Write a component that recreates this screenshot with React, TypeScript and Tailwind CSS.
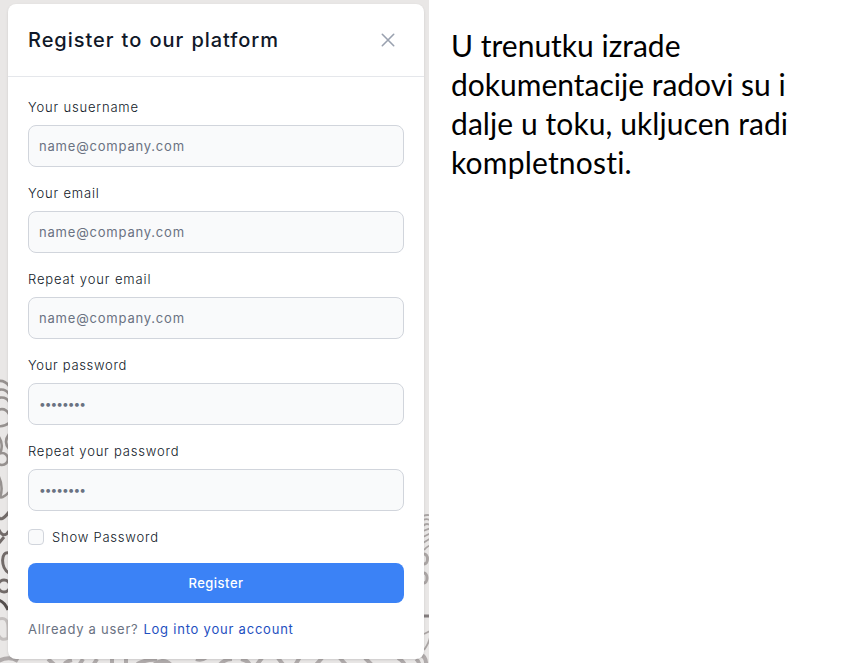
import React from "react";

type FieldProps = { label: string; placeholder: string; type?: string; labelClass: string };

function Field({ label, placeholder, type = "text", labelClass }: FieldProps) {
  const dots = type === "password";
  return (
    <div>
      <label className={`mb-2 block text-[13px] leading-5 font-[350] text-gray-900 ${labelClass}`}>{label}</label>
      <input
        type={type}
        placeholder={placeholder}
        className={`block h-[42px] w-full rounded-lg border border-gray-300 bg-gray-50 px-2.5 leading-5 outline-none placeholder:text-gray-500 ${
          dots ? "pb-0.5 text-[12px] tracking-[-0.99px]" : "text-[13px] tracking-[0.8px]"
        }`}
      />
    </div>
  );
}

function Backdrop() {
  return (
    <svg className="absolute inset-0 h-full w-full" viewBox="0 0 429 663" fill="none">
      <rect width="429" height="663" fill="#e9e7e6" />
      <g stroke="#96918f" strokeWidth="2.6">
        <path d="M-2 381Q5 380 9 386M-2 390Q5 388 9 394M-2 398Q6 396 9 402M-2 410Q5 407 9 414M-2 426Q4 427 9 423" />
        <path d="M9 434Q3 442 9 449M-1 437Q4 445 0 453" />
        <circle cx="2" cy="459" r="6" />
        <path d="M-2 475Q4 486 0 498M9 492Q2 500 -2 496" />
      </g>
      <g stroke="#726b69" strokeWidth="3">
        <path d="M9 512Q0 524 -2 515M-2 528Q3 540 9 531M9 553C1 550 0 568 9 573M-1 543L4 537" />
        <circle cx="4" cy="586" r="6" />
        <path d="M-2 600Q4 601 8 610" stroke="#554f4e" />
      </g>
      <path d="M-1 619Q8 616 8 628V638Q1 642 -2 634" stroke="#c4c0bf" strokeWidth="3" />
      <g stroke="#b0abab" strokeWidth="4">
        <path d="M-3 662Q8 655 18 661M48 659L57 667M72 660Q63 662 65 667M83 659L78 667M97 659L92 667M112 659V667M126 659V667M137 664Q147 659 157 660M151 667Q163 656 171 665" />
        <path d="M196 659Q202 661 207 657M218 667Q223 659 232 659M241 659Q250 661 250 667M262 658L255 667M278 658L285 667M294 667L300 657M314 667L322 658M339 657L348 667M365 658L374 667M398 658Q405 662 405 667M421 655Q427 657 426 667M416 659Q420 662 419 667" />
      </g>
      <g stroke="#aaa5a4" strokeWidth="1.8">
        <path d="M423 516Q428 514 431 516M423 520Q428 518 431 521M423 526Q427 522 431 526M423 531L431 528M423 537L431 533M423 543L431 538M424 550Q429 544 431 547" />
        <ellipse cx="424" cy="559" rx="3.5" ry="5" strokeWidth="3" />
        <ellipse cx="424" cy="578" rx="3" ry="5" strokeWidth="3" />
        <path d="M422 616H430" stroke="#837d7e" strokeWidth="3" />
        <path d="M424 634L430 631M424 650Q429 643 430 637" />
      </g>
    </svg>
  );
}

export default function App() {
  return (
    <main className="flex h-[663px] w-[867px] overflow-hidden bg-white">
      <section className="relative w-[429px] shrink-0 overflow-hidden pt-1 pr-[5px] pl-2 font-['Inter',sans-serif]">
        <Backdrop />
        <div className="relative h-[655px] rounded-lg bg-white shadow">
          <header className="flex h-[73px] items-center justify-between border-b border-gray-200 px-5">
            <h3 className="text-[20px] leading-[30px] font-medium tracking-[0.95px] text-gray-900 [word-spacing:1px]">Register to our platform</h3>
            <button aria-label="Close modal" className="flex size-8 items-center justify-center text-gray-400">
              <svg className="size-3.5" viewBox="0 0 14 14" fill="none" stroke="currentColor" strokeWidth="1.6" strokeLinecap="round" strokeLinejoin="round">
                <path d="m1.3 1.3 11.4 11.4M1.3 12.7 12.7 1.3" />
              </svg>
            </button>
          </header>
          <form className="flex flex-col gap-4 px-5 pt-5">
            <Field label="Your usuername" placeholder="name@company.com" labelClass="tracking-[0.82px]" />
            <Field label="Your email" placeholder="name@company.com" labelClass="tracking-[0.82px]" />
            <Field label="Repeat your email" placeholder="name@company.com" labelClass="tracking-[0.87px]" />
            <Field label="Your password" placeholder="••••••••" type="password" labelClass="tracking-[0.68px]" />
            <Field label="Repeat your password" placeholder="••••••••" type="password" labelClass="tracking-[0.8px]" />
            <label className="flex h-5 items-center gap-2 text-[13px] leading-5 font-[350] tracking-[0.78px] text-gray-900">
              <input type="checkbox" className="size-4 appearance-none rounded border border-gray-300 bg-gray-50" />
              <span>Show Password</span>
            </label>
            <button type="button" className="h-10 w-full rounded-lg bg-[#3b82f6] pt-0.5 text-[13px] font-medium tracking-[0.5px] text-white">Register</button>
            <p className="flex gap-[5px] text-[13px] leading-5 whitespace-nowrap text-gray-500">
              <span className="tracking-[0.74px]">Allready a user?</span>
              <a className="tracking-[0.78px] text-[#1e4fbf]">Log into your account</a>
            </p>
          </form>
        </div>
      </section>
      <p className="flex flex-col pt-[26px] pl-[22px] font-['Lato',sans-serif] text-[30px] leading-[39px] whitespace-nowrap text-black [font-variant-ligatures:none]">
        <span>U trenutku izrade</span>
        <span>dokumentacije radovi su i</span>
        <span className="tracking-[0.08px]">dalje u toku, ukljucen radi</span>
        <span className="tracking-[0.2px]">kompletnosti.</span>
      </p>
    </main>
  );
}
